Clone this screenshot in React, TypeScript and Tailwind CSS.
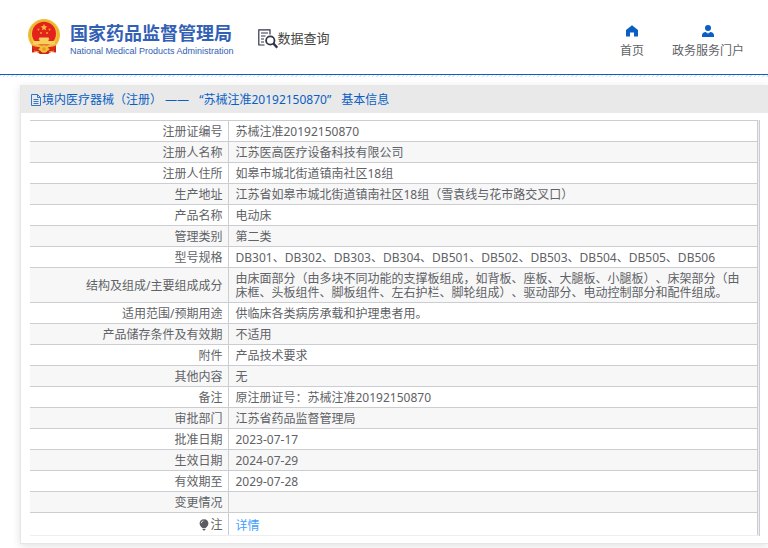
const rows = [
  { label: "注册证编号", value: "苏械注准20192150870" },
  { label: "注册人名称", value: "江苏医高医疗设备科技有限公司" },
  { label: "注册人住所", value: "如皋市城北街道镇南社区18组" },
  { label: "生产地址", value: "江苏省如皋市城北街道镇南社区18组（雪袁线与花市路交叉口）" },
  { label: "产品名称", value: "电动床" },
  { label: "管理类别", value: "第二类" },
  {
    label: "型号规格",
    value: "DB301、DB302、DB303、DB304、DB501、DB502、DB503、DB504、DB505、DB506",
  },
  {
    label: "结构及组成/主要组成成分",
    value:
      "由床面部分（由多块不同功能的支撑板组成，如背板、座板、大腿板、小腿板）、床架部分（由床框、头板组件、脚板组件、左右护栏、脚轮组成）、驱动部分、电动控制部分和配件组成。",
  },
  { label: "适用范围/预期用途", value: "供临床各类病房承载和护理患者用。" },
  { label: "产品储存条件及有效期", value: "不适用" },
  { label: "附件", value: "产品技术要求" },
  { label: "其他内容", value: "无" },
  { label: "备注", value: "原注册证号：苏械注准20192150870" },
  { label: "审批部门", value: "江苏省药品监督管理局" },
  { label: "批准日期", value: "2023-07-17" },
  { label: "生效日期", value: "2024-07-29" },
  { label: "有效期至", value: "2029-07-28" },
  { label: "变更情况", value: "" },
];

function Emblem() {
  return (
    <svg viewBox="0 0 32 36" className="h-9 w-8 shrink-0" aria-hidden="true">
      <path d="M4 25L4 33.5L9 33L12 35H20L23 33L28 33.5L28 25Z" fill="#cf2020" />
      <circle cx="16" cy="16" r="16" fill="#f2c037" />
      <circle cx="16" cy="16" r="14.3" fill="none" stroke="#e0a02a" strokeWidth=".6" />
      <circle cx="16" cy="14.8" r="12" fill="#e3231b" />
      <path d="M16 5l1 2.1 2.3.3-1.7 1.6.4 2.3-2-1.1-2 1.1.4-2.3-1.7-1.6 2.3-.3z" fill="#f8b93a" />
      <g fill="#f5a035">
        <circle cx="10.5" cy="10.5" r="1" />
        <circle cx="21.5" cy="10.5" r="1" />
        <circle cx="13" cy="14" r="1" />
        <circle cx="19" cy="14" r="1" />
      </g>
      <path d="M11.5 18.5h9l1 2h-1v1.5h6l1 3.5h-23l1-3.5h6v-1.5h-1z" fill="#f6cf5e" />
      <path d="M4 26.5Q9 28.5 12 28L10 31.5Q6 31 4 28.5ZM28 26.5Q23 28.5 20 28L22 31.5Q26 31 28 28.5Z" fill="#dd2a1e" />
      <circle cx="16" cy="30" r="3.8" fill="#f2c037" />
      <circle cx="16" cy="30" r="1.7" fill="#dc9a26" />
      <path d="M6 32l5 1M26 32l-5 1" stroke="#f0b72f" strokeWidth="1.2" />
    </svg>
  );
}

function SearchDocIcon() {
  return (
    <svg viewBox="0 0 20 20" className="h-5 w-5 shrink-0" fill="none" stroke="#33334a" aria-hidden="true">
      <path d="M6.5 16H.8V.8H12V5.5" strokeWidth="1.2" />
      <path d="M3 4h7M3 7h4.5M3 10h3M3 13h3" strokeWidth="1" />
      <circle cx="12.3" cy="11.5" r="4.2" strokeWidth="1.8" />
      <path d="M15.5 14.7l3.8 4" strokeWidth="2.4" />
    </svg>
  );
}

function HomeIcon() {
  return (
    <svg viewBox="0 0 12 12" className="h-3 w-3" fill="#0a5fc4" aria-hidden="true">
      <path d="M6 .2L12 5V11.5H8V7.5H4V11.5H0V5Z" />
    </svg>
  );
}

function UserIcon() {
  return (
    <svg viewBox="0 0 12 12" className="h-3 w-3" fill="#0a5fc4" aria-hidden="true">
      <circle cx="6" cy="3" r="3" />
      <path d="M0 12V10.5Q0 7 4 7L6 9.5 8 7Q12 7 12 10.5V12Z" />
      <path d="M6 7.5l.8 1L6 11l-.8-2.5z" />
    </svg>
  );
}

function DocIcon() {
  return (
    <svg viewBox="0 0 12 12" className="h-3 w-3 shrink-0" fill="none" stroke="#3377c9" aria-hidden="true">
      <path d="M1.5.5H7.5L10.5 3.5V11.5H1.5ZM7.5.5V3.5H10.5M3.5 5.5H8.5M3.5 7.5H8.5M3.5 9.5H8.5" />
    </svg>
  );
}

function BulbIcon() {
  return (
    <svg viewBox="0 0 10 12" className="h-3 w-2.5" fill="#5a5c62" aria-hidden="true">
      <path d="M5 .2C2.2.2.6 2.2.6 4.4.6 6.6 2.4 8 3.4 9H6.6C7.6 8 9.4 6.6 9.4 4.4 9.4 2.2 7.8.2 5 .2Z" />
      <path d="M3.6 9.8h2.8v.8L5.6 11.5H4.4l-.8-.9z" />
      <path d="M2.2 4.2Q2.4 2.2 4.4 1.9" stroke="#fff" strokeWidth=".8" fill="none" />
    </svg>
  );
}

export default function App() {
  return (
    <div className="bg-white font-['Noto_Sans','Noto_Sans_CJK_SC',sans-serif] text-xs text-[#606266] [text-spacing-trim:space-all]">
      <header className="flex h-[75px] items-center justify-between border-b border-[#0a5fc4] pr-6 pl-7">
        <div className="flex items-center">
          <a href="#" className="flex items-center gap-2.5">
            <Emblem />
            <span className="flex flex-col pt-1 whitespace-nowrap text-[#3260b5]">
              <span className="text-lg leading-6 font-bold">国家药品监督管理局</span>
              <span className="font-['Liberation_Sans',sans-serif] text-[9px] leading-3">
                National Medical Products Administration
              </span>
            </span>
          </a>
          <a href="#" className="ml-6 flex items-center pt-1 text-[13px] whitespace-nowrap text-[#444]">
            <SearchDocIcon />
            数据查询
          </a>
        </div>
        <nav className="flex gap-7 pt-2 leading-5">
          <a href="#" className="flex flex-col items-center gap-1">
            <span className="flex h-4 items-end">
              <HomeIcon />
            </span>
            首页
          </a>
          <a href="#" className="flex flex-col items-center gap-1">
            <span className="flex h-4 items-end">
              <UserIcon />
            </span>
            政务服务门户
          </a>
        </nav>
      </header>
      <div className="h-0.5 bg-[repeating-linear-gradient(135deg,#e4e4e4_0_1px,#fff_1px_3px)]" />

      <main className="pt-2 pb-1 pl-5">
        <section className="border-b border-l border-[#e6e6e6] bg-white pb-[7px] shadow-[0_2px_8px_rgba(0,0,0,0.12)]">
          <h1 className="flex h-7 items-center bg-[#e9e9e9] pt-0.5 pl-[9px] text-[#0a5fc4]">
            <DocIcon />
            <span className="flex gap-2.5">
              <span>境内医疗器械（注册） ——</span>
              <span>“苏械注准20192150870”</span>
              <span>基本信息</span>
            </span>
          </h1>
          <div className="mt-[7px] mr-2 ml-[9px] border-r border-[#cccdd2] bg-[#ebeef5] pr-px">
            <table className="w-full border-collapse bg-white leading-[14px]">
              <tbody>
                {rows.map((row) => (
                  <tr key={row.label} className="even:bg-[#f7f7f7]">
                    <th
                      scope="row"
                      className="w-[198px] border-y border-r border-[#cccdd0] pt-1 pr-[5px] pb-0.5 text-right font-normal"
                    >
                      {row.label}
                    </th>
                    <td className="border border-[#cccdd0] pt-1 pr-3 pb-0.5 pl-[7px]">{row.value}</td>
                  </tr>
                ))}
                <tr>
                  <th
                    scope="row"
                    className="border-r border-b border-r-[#cccdd0] border-b-[#ebeef5] pt-[5px] pr-[5px] pb-[3px] font-normal"
                  >
                    <span className="flex items-center justify-end gap-px">
                      <BulbIcon />注
                    </span>
                  </th>
                  <td className="border-r border-b border-r-[#cccdd0] border-b-[#ebeef5] pt-1.5 pb-0.5 pl-[7px]">
                    <a href="#" className="text-[#409eff]">
                      详情
                    </a>
                  </td>
                </tr>
              </tbody>
            </table>
          </div>
        </section>
      </main>
    </div>
  );
}
